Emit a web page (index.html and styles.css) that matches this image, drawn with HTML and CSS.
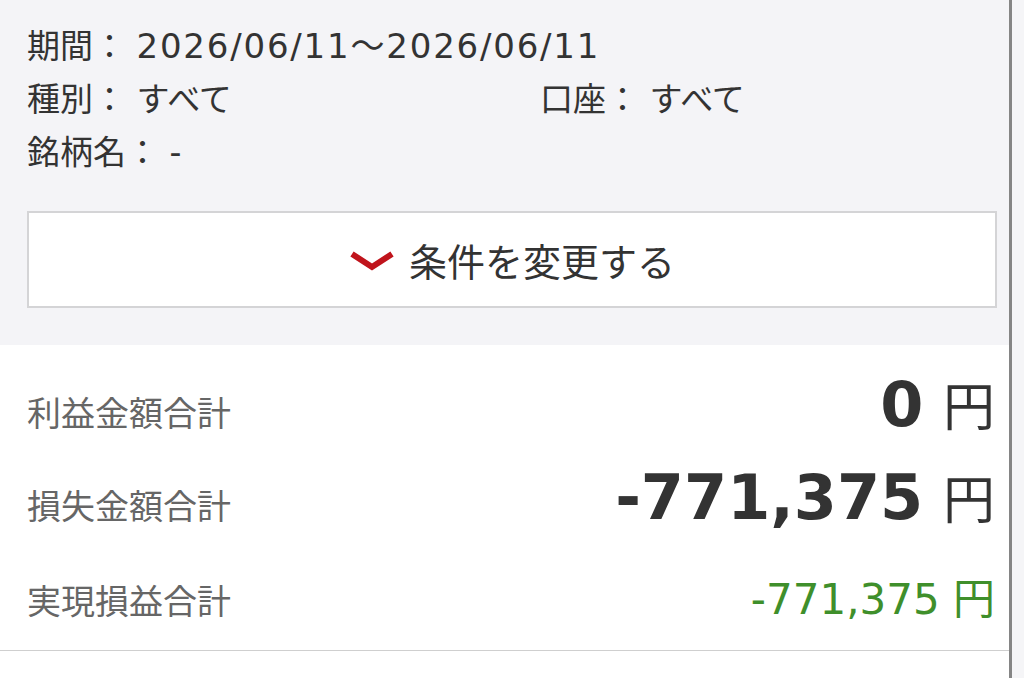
FILE: index.html
```html
<!DOCTYPE html>
<html lang="ja">
<head>
  <meta charset="UTF-8" />
  <meta name="viewport" content="width=device-width, initial-scale=1" />
  <title>実現損益</title>
  <link rel="stylesheet" href="styles.css">
</head>
<body>
  <div class="page">
    <!-- 検索条件 -->
    <section class="filter">
      <div class="cond-row">
        <span>期間： <span class="date">2026/06/11〜2026/06/11</span></span>
      </div>
      <div class="cond-row">
        <span class="cond-left">種別： すべて</span>
        <span>口座： すべて</span>
      </div>
      <div class="cond-row">
        <span>銘柄名： -</span>
      </div>

      <button class="change-btn" type="button">
        <svg class="chevron" width="46" height="22" viewBox="0 0 46 22">
          <polyline points="3,4 23,17 43,4" fill="none" stroke="#c0141c" stroke-width="6" />
        </svg>
        <span>条件を変更する</span>
      </button>
    </section>

    <!-- 合計 -->
    <section class="summary">
      <div class="sum-row first">
        <span class="sum-label">利益金額合計</span>
        <span class="sum-value big"><b>0</b> <span class="yen">円</span></span>
      </div>
      <div class="sum-row">
        <span class="sum-label">損失金額合計</span>
        <span class="sum-value big"><b>-771,375</b> <span class="yen">円</span></span>
      </div>
      <div class="sum-row last">
        <span class="sum-label">実現損益合計</span>
        <span class="sum-value total">-771,375 円</span>
      </div>
    </section>
  </div>
</body>
</html>
```

FILE: styles.css
```css
* {
  margin: 0;
  padding: 0;
  box-sizing: border-box;
  font-family: "DejaVu Sans", "Noto Sans CJK JP", sans-serif;
}

body {
  background: #f5f5f7;
  color: #333;
  height: 100vh;
  overflow: hidden;
}

.page {
  width: 1012px;
  height: 100%;
  background: #fff;
  border-right: 3px solid #858585;
}

.filter {
  background: #f4f4f7;
  padding: 20px 12px 37px 27px;
}

.cond-row {
  display: flex;
  font-size: 33px;
  line-height: 53px;
  color: #333;
  white-space: nowrap;
}

.cond-left {
  width: 513px;
}

.date {
  font-size: 34px;
  letter-spacing: 1.8px;
}

.change-btn {
  margin-top: 32px;
  width: 100%;
  height: 97px;
  background: #fff;
  border: 2px solid #d4d4d6;
  display: flex;
  align-items: center;
  justify-content: center;
  gap: 14px;
  font-size: 38px;
  color: #333;
  cursor: pointer;
}

.change-btn span {
  font-family: "Noto Sans CJK JP", sans-serif;
}

.chevron {
  margin-top: 2px;
}

.summary {
  padding: 21px 14px 0 27px;
  border-bottom: 1px solid #cfcfcf;
  height: 306px;
}

.sum-row {
  display: flex;
  justify-content: space-between;
  align-items: baseline;
  height: 91px;
}

.sum-row.first {
  height: 93px;
}

.sum-row.last {
  padding-top: 15px;
}

.sum-label {
  font-family: "Noto Sans CJK JP", sans-serif;
  font-size: 34px;
  color: #666;
}

.sum-value.big {
  font-size: 62px;
  color: #333;
}

.sum-value.big b {
  font-weight: bold;
}

.yen {
  font-family: "Noto Sans CJK JP", sans-serif;
  font-size: 52px;
  color: #333;
}

.sum-value.total {
  font-size: 42px;
  color: #3f8f2b;
}
```
